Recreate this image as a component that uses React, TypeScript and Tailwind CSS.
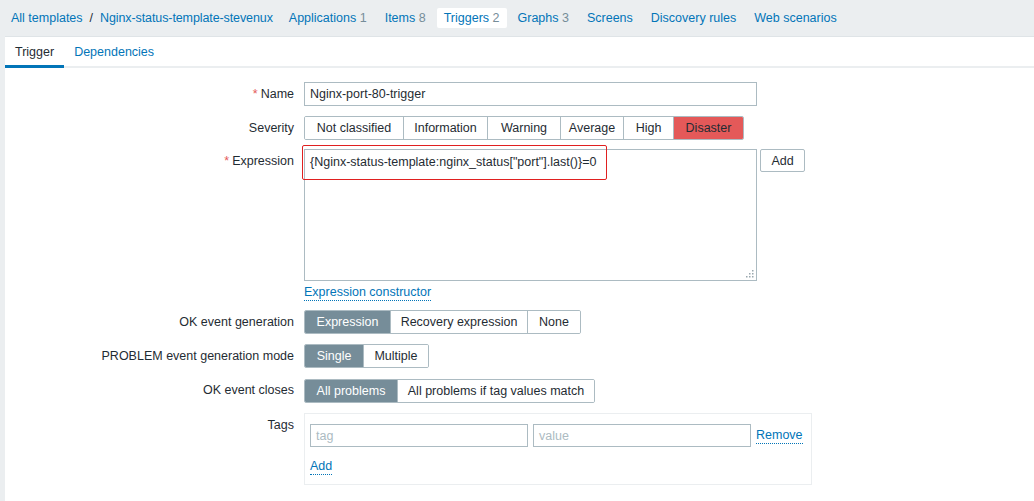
import React from 'react';

const font = "font-['Liberation_Sans',Arial,sans-serif]";

type Seg = { label: string; w: number; active?: boolean; danger?: boolean };

function Segmented({ items }: { items: Seg[] }) {
  return (
    <div className="flex h-[24px] border border-[#acbbc2] rounded-[2px] overflow-hidden w-fit">
      {items.map((s, i) => (
        <div
          key={s.label}
          style={{ width: s.w - (i === 0 ? 1 : 0) }}
          className={
            'flex items-center justify-center whitespace-nowrap ' +
            (i > 0 ? 'border-l border-[#acbbc2] ' : '') +
            (s.active ? 'bg-[#768d99] text-white ' : s.danger ? 'bg-[#e45959] text-[#1f2c33] ' : 'bg-white text-[#1f2c33] ')
          }
        >
          {s.label}
        </div>
      ))}
    </div>
  );
}

function Row({ label, required, children, top = 'pt-[5px]' }: { label: string; required?: boolean; children: React.ReactNode; top?: string }) {
  return (
    <div className="flex">
      <div className={'w-[299px] pr-[10px] text-right text-[#1f2c33] shrink-0 whitespace-nowrap ' + top}>
        {required && <span className="text-[#e45959] mr-[3px]">*</span>}
        {label}
      </div>
      <div className="flex-1">{children}</div>
    </div>
  );
}

const navItems = [
  { label: 'Applications', count: '1' },
  { label: 'Items', count: '8' },
  { label: 'Triggers', count: '2', active: true },
  { label: 'Graphs', count: '3' },
  { label: 'Screens' },
  { label: 'Discovery rules' },
  { label: 'Web scenarios' },
];

export default function App() {
  return (
    <div className={'min-h-[501px] bg-[#ebeef0] text-[12.5px] leading-[14px] ' + font}>
      {/* breadcrumbs + host navigation */}
      <div className="h-[36px] flex items-center pl-[11px] pb-[1px]">
        <span className="text-[#0275b8]">All templates</span>
        <span className="mx-[7px] text-[#1f2c33]">/</span>
        <span className="text-[#0275b8] tracking-[-0.1px]">Nginx-status-template-stevenux</span>
        <div className="flex items-center ml-[9px] gap-[4px]">
          {navItems.map((n) => (
            <div
              key={n.label}
              className={'px-[7px] py-[3px] rounded-[2px] ' + (n.active ? 'bg-white' : '')}
            >
              <span className="text-[#0275b8]">{n.label}</span>
              {n.count && <span className="text-[#768d99]"> {n.count}</span>}
            </div>
          ))}
        </div>
      </div>

      <div className="ml-[5px] bg-white min-h-[465px] border-t border-[#dfe4e7]">
        {/* tabs */}
        <div className="flex h-[31px] border-b-2 border-[#ebeef0]">
          <div className="relative px-[10px] flex items-center text-[#1f2c33]">
            Trigger
            <div className="absolute left-0 right-0 -bottom-[2px] h-[3px] bg-[#0275b8]" />
          </div>
          <div className="px-[10px] flex items-center text-[#0275b8]">Dependencies</div>
        </div>

        <div className="pt-[14px] flex flex-col gap-[10px]">
          <Row label="Name" required>
            <div className="w-[453px] h-[24px] border border-[#acbbc2] flex items-center px-[5px] text-[#1f2c33]">
              Nginx-port-80-trigger
            </div>
          </Row>

          <Row label="Severity">
            <Segmented
              items={[
                { label: 'Not classified', w: 99 },
                { label: 'Information', w: 84 },
                { label: 'Warning', w: 73 },
                { label: 'Average', w: 63 },
                { label: 'High', w: 50 },
                { label: 'Disaster', w: 70, danger: true },
              ]}
            />
          </Row>

          <div className="-mt-[1px]">
            <Row label="Expression" required>
              <div className="flex items-start gap-[3px]">
                <div className="relative w-[453px] h-[132px] border border-[#acbbc2] px-[5px] pt-[5px] text-[#1f2c33]">
                  {'{Nginx-status-template:nginx_status["port"].last()}=0'}
                  <div className="absolute -left-[3px] -top-[5px] w-[305px] h-[35px] border border-[#e02020] rounded-[2px]" />
                  <svg className="absolute right-[2px] bottom-[2px]" width="8" height="8" viewBox="0 0 8 8">
                    <rect x="6" y="0" width="1.5" height="1.5" fill="#9aa7ae" />
                    <rect x="3" y="3" width="1.5" height="1.5" fill="#9aa7ae" />
                    <rect x="6" y="3" width="1.5" height="1.5" fill="#9aa7ae" />
                    <rect x="0" y="6" width="1.5" height="1.5" fill="#9aa7ae" />
                    <rect x="3" y="6" width="1.5" height="1.5" fill="#9aa7ae" />
                    <rect x="6" y="6" width="1.5" height="1.5" fill="#9aa7ae" />
                  </svg>
                </div>
                <div className="w-[45px] h-[23px] border border-[#acbbc2] rounded-[2px] flex items-center justify-center text-[#1f2c33]">
                  Add
                </div>
              </div>
              <div className="pt-[4px] h-[19px]">
                <span className="text-[#0275b8] border-b border-dotted border-[#0275b8] pb-[1px]">Expression constructor</span>
              </div>
            </Row>
          </div>

          <Row label="OK event generation">
            <Segmented
              items={[
                { label: 'Expression', w: 86, active: true },
                { label: 'Recovery expression', w: 137 },
                { label: 'None', w: 53 },
              ]}
            />
          </Row>

          <Row label="PROBLEM event generation mode">
            <Segmented
              items={[
                { label: 'Single', w: 59, active: true },
                { label: 'Multiple', w: 65 },
              ]}
            />
          </Row>

          <Row label="OK event closes">
            <div className="pt-[1px]">
              <Segmented
                items={[
                  { label: 'All problems', w: 93, active: true },
                  { label: 'All problems if tag values match', w: 197 },
                ]}
              />
            </div>
          </Row>

          <Row label="Tags" top="pt-[5px]">
            <div className="w-[508px] border border-[#ebeef0] px-[5px] pt-[10px] pb-[11px]">
              <div className="flex items-center gap-[5px]">
                <div className="w-[218px] h-[23px] border border-[#acbbc2] flex items-center px-[5px] text-[#acbbc2]">tag</div>
                <div className="w-[218px] h-[23px] border border-[#acbbc2] flex items-center px-[5px] text-[#acbbc2]">value</div>
                <span className="text-[#0275b8] border-b border-dotted border-[#0275b8] pb-[1px]">Remove</span>
              </div>
              <div className="pt-[12px]">
                <span className="text-[#0275b8] border-b border-dotted border-[#0275b8] pb-[1px]">Add</span>
              </div>
            </div>
          </Row>
        </div>
      </div>
    </div>
  );
}
